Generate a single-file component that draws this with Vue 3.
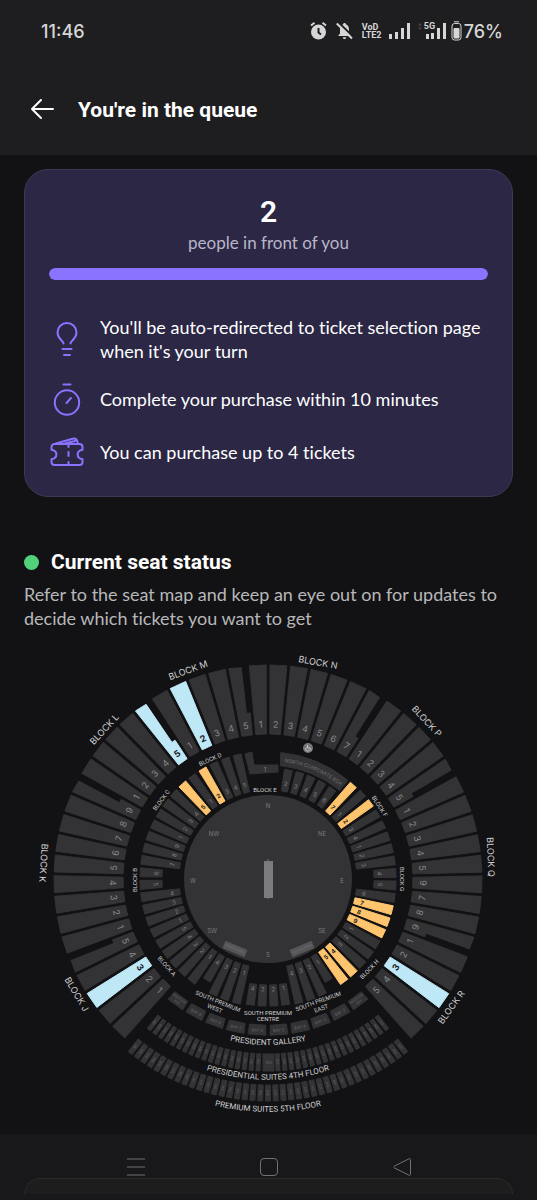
<script setup>
import { computed, ref } from 'vue'

const peopleAhead = ref(2)
const progress = ref(100)

const tips = [
  { icon: 'bulb', text: "You'll be auto-redirected to ticket selection page when it's your turn" },
  { icon: 'timer', text: 'Complete your purchase within 10 minutes' },
  { icon: 'ticket', text: 'You can purchase up to 4 tickets' },
]

// angles run clockwise from the north end of the ground, in degrees
const point = (angle, radius) => {
  const rad = (angle * Math.PI) / 180
  return [Math.sin(rad) * radius, -Math.cos(rad) * radius]
}
const toPoints = (list) => list.map((p) => p.map((n) => n.toFixed(2)).join(',')).join(' ')

// a stand with outer width wo and inner width wi, centred on an angle
const wedge = (angle, inner, outer, wi, wo) => {
  const rad = (angle * Math.PI) / 180
  const place = (x, r) => [Math.cos(rad) * x + Math.sin(rad) * r, Math.sin(rad) * x - Math.cos(rad) * r]
  return toPoints([place(-wi / 2, inner), place(-wo / 2, outer), place(wo / 2, outer), place(wi / 2, inner)])
}

const readable = (angle) => (Math.abs(angle) > 90 ? angle + 180 : angle)
const labelAt = (angle, radius, rotate = readable(angle)) => {
  const [x, y] = point(angle, radius)
  return `translate(${x.toFixed(2)} ${y.toFixed(2)}) rotate(${rotate.toFixed(1)})`
}

const upperBlocks = [['J', 5], ['K', 9], ['L', 5], ['M', 5], ['N', 7], ['P', 5], ['Q', 9], ['R', 5]]
const upperOpen = ['J3', 'L5', 'M2', 'R3']

const upperStands = computed(() => {
  const stands = []
  let index = 0
  upperBlocks.forEach(([block, count]) => {
    for (let seat = 1; seat <= count; seat++) {
      const angle = -135.7 + 5.54 * index
      const left = angle - 2.77
      const right = angle + 2.77
      // the last stand of a block gives way to the stairs
      const shape = seat === count && block !== 'R'
        ? [point(left + 0.7, 145), point(left + 0.5, 214), point(right - 1.7, 213), point(right - 1.9, 167), point(right - 0.6, 167), point(right - 0.7, 145)]
        : [point(left + 0.7, 145), point(left + 0.5, 214), point(right - 0.5, 214), point(right - 0.7, 145)]
      stands.push({ id: block + seat, seat, points: toPoints(shape), label: labelAt(angle, 155), open: upperOpen.includes(block + seat) })
      index++
    }
  })
  return stands
})

const lowerBlocks = [
  ['W', [1, 2, 3, 4], -165.7], ['A', [1, 2, 3, 4, 5], -143.2], ['B', [1, 2, 3, 4, 5, 6, 7, 8, 9], -115.1], ['C', [1, 2, 3, 4, 5], -64.5], ['D', [1, 2, 3, 4, 5], -36.4],
  ['F', [1, 2, 3, 4], 47.9], ['G', [1, 2, 3, 4, 5, 6, 7, 8, 9], 70.4], ['H', [1, 2, 3, 4, 5], 121], ['S', [1, 2, 3, 4], 149.1],
]
const lowerOpen = ['C5', 'D2', 'E7', 'F2', 'G7', 'G8', 'G9', 'H4', 'H5']

const lowerStands = computed(() => {
  const stands = []
  lowerBlocks.forEach(([block, seats, start]) => {
    seats.forEach((seat, i) => {
      const id = block + seat
      const angle = start + 5.62 * i
      const short = ['B5', 'B6', 'G4', 'G5'].includes(id)
      const clipped = ['W4', 'S1'].includes(id)
      const wide = 'DFWS'.includes(block) ? 8 : 9
      const flat = Math.abs(angle) > 95 && Math.abs(angle) < 117
      const turn = flat ? angle - Math.sign(angle) * 90 : readable(angle)
      stands.push({
        id,
        seat,
        points: wedge(angle, short ? 106 : 89, clipped ? 118 : 128, short ? 7 : 6, wide),
        label: labelAt(angle, short ? 112 : 97, turn),
        open: lowerOpen.includes(id),
      })
    })
  })
  const north = [10.6, 16.7, 22.9, 29.2, 35.6, 42.2]
  north.forEach((angle, i) => {
    const id = 'E' + (i + 2)
    stands.push({ id, seat: i + 2, points: wedge(angle, 89, id === 'E7' ? 127 : 111, 6, 8), label: labelAt(angle, 97), open: lowerOpen.includes(id) })
  })
  ;[172, 177.3, -177.3, -172].forEach((angle, i) => {
    stands.push({ id: 'X' + (i + 1), seat: i + 1, points: wedge(angle, 106, 127, 7, 8), label: labelAt(angle, 110), open: false })
  })
  return stands
})

const bays = computed(() =>
  Array.from({ length: 10 }, (_, i) => {
    const angle = 180 + (4.5 - i) * 8.1
    return {
      id: i,
      points: wedge(angle, 146, 156, 16, 18),
      label: labelAt(angle, 151, angle - 180),
      lines: i === 0 || i === 9 ? ['PRESIDENT', 'BOX'] : [`BAY ${10 - i}`],
    }
  }),
)

const suites = computed(() => {
  const list = []
  for (let i = 0; i < 18; i++) {
    for (const side of [-1, 1]) {
      const angle = side * (177 - i * 2.08)
      list.push({ id: `p${side}${i}`, points: wedge(angle, 175, 192, 4, 4), label: labelAt(angle, 183, angle + 90), text: 419 + side * (i + 1) })
    }
  }
  for (let i = -19; i <= 19; i++) {
    const angle = 180 + i * 2.02
    list.push({ id: `f${i}`, points: wedge(angle, 206, 222, 5, 5), label: labelAt(angle, 214, angle + 90), text: 520 - i })
  }
  return list
})

const names = [
  { text: 'BLOCK J', x: -191, y: 115, turn: 59 },
  { text: 'BLOCK K', x: -224, y: -16, turn: 94 },
  { text: 'BLOCK L', x: -164, y: -150, turn: -47 },
  { text: 'BLOCK M', x: -80, y: -209, turn: -20 },
  { text: 'BLOCK N', x: 50, y: -217, turn: 10 },
  { text: 'BLOCK P', x: 159, y: -158, turn: 47 },
  { text: 'BLOCK Q', x: 223, y: -22, turn: 88 },
  { text: 'BLOCK R', x: 183, y: 128, turn: -54 },
  { text: 'BLOCK A', x: -101, y: 87, turn: 49, small: true },
  { text: 'BLOCK B', x: -134, y: 1, turn: -90, small: true },
  { text: 'BLOCK C', x: -107, y: -79, turn: -53, small: true },
  { text: 'BLOCK D', x: -58, y: -120, turn: -24, small: true },
  { text: 'BLOCK E', x: -3, y: -90, turn: 0, small: true },
  { text: 'BLOCK F', x: 112, y: -73, turn: 57, small: true },
  { text: 'BLOCK G', x: 134, y: 0, turn: 90, small: true },
  { text: 'BLOCK H', x: 101, y: 90, turn: -47, small: true },
  { text: 'SOUTH PREMIUM', x: -50, y: 122, turn: 22, small: true },
  { text: 'WEST', x: -53, y: 129, turn: 22, small: true },
  { text: 'SOUTH PREMIUM', x: 0, y: 133, turn: 0, small: true },
  { text: 'CENTRE', x: 0, y: 139, turn: 0, small: true },
  { text: 'SOUTH PREMIUM', x: 50, y: 122, turn: -20, small: true },
  { text: 'EAST', x: 53, y: 129, turn: -20, small: true },
]

const compass = [
  ['N', 0, -74], ['NE', 54, -46], ['E', 74, 1], ['SE', 54, 51],
  ['S', 0, 75], ['SW', -56, 51], ['W', -75, 1], ['NW', -54, -46],
]
</script>

<template>
  <div class="screen">
    <header class="top">
      <div class="status">
        <span class="clock">11:46</span>
        <div class="indicators">
          <svg class="alarm" viewBox="0 0 17 18" width="17" height="18">
            <circle cx="8.500" cy="10" r="7.500" />
            <path d="M1 3.500 4.500 .8M16 3.500 12.500 .8" class="line" />
            <path d="M8.500 6v4.500l2.500 2" class="hand" />
          </svg>
          <svg class="muted" viewBox="0 0 17 18" width="17" height="18">
            <path d="M8.500 1c1 0 1.300.6 1.300 1.300C12 3 13 5 13 7.500v4L15 14H2l2-2.500v-4C4 5 5 3 7.200 2.300 7.200 1.600 7.500 1 8.500 1zM6.800 15.200h3.400c0 2.400-3.400 2.400-3.400 0z" />
            <path d="M2.500 .5 17 14.500" class="cut" />
            <path d="M.8 1.500 16 16.500" class="line" />
          </svg>
          <span class="volte"><span>VoD</span><span>LTE2</span></span>
          <svg class="bars" viewBox="0 0 22 16" width="22" height="16">
            <path d="M0 11h3v5H0zM6 9h3v7H6zM12 5h3v11h-3zM18 0h3v16h-3z" />
          </svg>
          <span class="five-g">
            <svg class="bars" viewBox="0 0 28 18" width="28" height="18">
              <path d="M0 3.500 2 1l2 2.500zM0 5.500 2 8l2-2.500z" class="dim" />
              <path d="M8 12h3v5H8zM13 11h3v6h-3zM19 6h3v11h-3zM25 1h3v16h-3z" />
            </svg>
            <small>5G</small>
          </span>
          <svg class="battery" viewBox="0 0 11 20" width="11" height="20">
            <path d="M3 .8h5" class="line" />
            <rect x="1" y="2.500" width="9" height="16.500" rx="2.500" class="line" />
            <rect x="2.500" y="7" width="6" height="10.500" rx="1" />
          </svg>
          <span class="charge">76%</span>
        </div>
      </div>
      <div class="bar">
        <button type="button" class="back" aria-label="Go back">
          <svg viewBox="0 0 24 24" width="24" height="24"><path d="M11 3 2 12l9 9M2 12h21" /></svg>
        </button>
        <h1>You're in the queue</h1>
      </div>
    </header>

    <main>
      <section class="queue">
        <p class="count">{{ peopleAhead }}</p>
        <p class="caption">people in front of you</p>
        <div class="track" role="progressbar" :aria-valuenow="progress" aria-label="Queue progress">
          <div class="fill" :style="{ width: progress + '%' }"></div>
        </div>
        <ul>
          <li v-for="tip in tips" :key="tip.icon">
            <svg v-if="tip.icon === 'bulb'" viewBox="0 0 36 36" width="36" height="36">
              <path d="M14.500 21.500c0-3-6-4.500-6-11a9.500 9.500 0 0 1 19 0c0 6.500-6 8-6 11" />
              <path d="M13.500 27h9M15 33h6" />
            </svg>
            <svg v-else-if="tip.icon === 'timer'" viewBox="0 0 36 36" width="36" height="36">
              <circle cx="18" cy="20.500" r="12.200" />
              <path d="M14.500 2.500h7M17.500 21l4.500-5" />
            </svg>
            <svg v-else viewBox="0 0 36 36" width="36" height="36">
              <path d="M5.500 9h25a3 3 0 0 1 3 3v2.800c-6.500 1.200-6.500 8.200 0 9.400V27a3 3 0 0 1-3 3h-25a3 3 0 0 1-3-3v-2.800c6.500-1.200 6.500-8.200 0-9.400V12a3 3 0 0 1 3-3z" />
              <path d="M7 8.500 23.500 3.800c2.500-.8 4 .2 4.700 2.200l.9 2.500M16 8.500 28 5.500" />
              <path d="M19.500 9.500v2.500M19.500 17v4M19.500 27v2.500" />
            </svg>
            <span>{{ tip.text }}</span>
          </li>
        </ul>
      </section>

      <section class="seats">
        <h2><span class="dot"></span>Current seat status</h2>
        <p>Refer to the seat map and keep an eye out on for updates to decide which tickets you want to get</p>
      </section>

      <svg class="map" viewBox="-268 -239 537 494" role="img" aria-label="Seat map">
        <defs>
          <path id="box-arc" d="M4 -118 A118 118 0 0 1 82 -85" />
          <path id="gallery-arc" d="M-117.400 117.400 A166 166 0 0 0 117.400 117.400" />
          <path id="fourth-arc" d="M-142 142 A201 201 0 0 0 142 142" />
          <path id="fifth-arc" d="M-164.700 164.700 A233 233 0 0 0 164.700 164.700" />
        </defs>

        <g v-for="stand in upperStands" :key="stand.id" class="upper" :class="{ open: stand.open }">
          <polygon :points="stand.points" />
          <text :transform="stand.label">{{ stand.seat }}</text>
        </g>

        <circle r="84" class="field" />
        <g class="lower">
          <polygon points="-23,-125 -16,-127 -14,-114 10,-114 10,-107 -18,-105" />
          <text x="-3" y="-110">1</text>
          <path d="M12.700 -126.400 A127 127 0 0 1 79.900 -98.700 L71.700 -88.600 A114 114 0 0 0 12.500 -113.300Z" />
        </g>
        <g v-for="stand in lowerStands" :key="stand.id" class="lower" :class="{ open: stand.open }">
          <polygon :points="stand.points" />
          <text :transform="stand.label">{{ stand.seat }}</text>
        </g>
        <text class="box-name"><textPath href="#box-arc" startOffset="50%">NORTH CORPORATE BOX</textPath></text>
        <g class="access">
          <circle cx="40" cy="-131" r="5" />
          <path d="M39.500 -134v3h2.500l1 2.500M38.500 -131.500a2 2 0 1 0 3 2.500" />
        </g>

        <g class="micro">
          <g v-for="bay in bays" :key="bay.id">
            <polygon :points="bay.points" />
            <text :transform="bay.label" :class="{ bay: bay.lines.length === 1 }">
              <tspan v-for="(line, i) in bay.lines" :key="line" x="0" :y="bay.lines.length === 1 ? 0 : i * 4 - 2">{{ line }}</tspan>
            </text>
          </g>
          <rect x="-5" y="175" width="11" height="17" />
          <text x="1" y="184">BOX</text>
          <g v-for="suite in suites" :key="suite.id">
            <polygon :points="suite.points" />
            <text :transform="suite.label">{{ suite.text }}</text>
          </g>
        </g>

        <g class="screens">
          <rect x="-12" y="-4" width="24" height="8" transform="translate(-33 70) rotate(23)" />
          <rect x="-12" y="-4" width="24" height="8" transform="translate(34 70) rotate(-23)" />
          <text transform="translate(-33 70) rotate(23)">SIGHTSCREEN</text>
          <text transform="translate(34 70) rotate(-23)">SIGHTSCREEN</text>
        </g>
        <path d="M0 -20V20" class="stumps" />
        <rect x="-4" y="-18" width="9" height="37" class="wicket" />
        <text v-for="[name, x, y] in compass" :key="name" :x="x" :y="y" class="compass">{{ name }}</text>

        <text v-for="(name, i) in names" :key="i" class="name" :class="{ small: name.small }" :transform="`translate(${name.x} ${name.y}) rotate(${name.turn})`">{{ name.text }}</text>
        <text class="tier"><textPath href="#gallery-arc" startOffset="50%">PRESIDENT GALLERY</textPath></text>
        <text class="tier"><textPath href="#fourth-arc" startOffset="50%">PRESIDENTIAL SUITES 4TH FLOOR</textPath></text>
        <text class="tier"><textPath href="#fifth-arc" startOffset="50%">PREMIUM SUITES 5TH FLOOR</textPath></text>
      </svg>
    </main>

    <footer>
      <nav>
        <button type="button" aria-label="Recent apps">
          <svg viewBox="0 0 20 20" width="20" height="20"><path d="M1 2h18M1 10h18M1 18h18" /></svg>
        </button>
        <button type="button" aria-label="Home">
          <svg viewBox="0 0 20 20" width="20" height="20"><rect x="1.500" y="1.500" width="17" height="17" rx="3.500" /></svg>
        </button>
        <button type="button" aria-label="Back">
          <svg viewBox="0 0 20 20" width="20" height="20"><path d="M17 1.800 2.500 9c-1 .6-1 1.400 0 2L17 18.200c.8.400 1.500 0 1.500-.9V2.700c0-.9-.7-1.300-1.500-.9z" /></svg>
        </button>
      </nav>
      <div class="sheet"></div>
    </footer>
  </div>
</template>

<style>
body { margin: 0; background: #121214; }
</style>

<style scoped>
.screen { min-height: 100vh; display: flex; flex-direction: column; background: #121214; color: #fff; font-family: Lato, "Liberation Sans", sans-serif; font-variant-ligatures: none; }
h1, h2, p, ul { margin: 0; padding: 0; }
button { border: 0; padding: 0; background: none; color: inherit; cursor: pointer; }
svg { display: block; flex: none; }

.top { background: #1e1e20; }
.status { display: flex; justify-content: space-between; align-items: center; height: 62px; padding: 0 34px 0 41px; color: #d6d6d6; font: 500 18px Inter, sans-serif; }
.indicators { display: flex; align-items: center; }
.indicators svg { fill: #d6d6d6; }
.indicators .line { fill: none; stroke: #d6d6d6; stroke-width: 2; }
.alarm .hand { fill: none; stroke: #1e1e20; stroke-width: 2; }
.muted { margin-left: 9px; }
.muted .cut { stroke: #1e1e20; stroke-width: 2; }
.volte { display: flex; flex-direction: column; margin: 0 7px 0 9px; width: 20px; font: 700 9px/8px Roboto, sans-serif; white-space: nowrap; }
.five-g { position: relative; margin: 0 5px 0 7px; }
.five-g small { position: absolute; left: 6px; top: 0; background: #1e1e20; font: 700 9px/9px Roboto, sans-serif; }
.indicators .dim { fill: #48484a; }
.battery .line { stroke-width: 1; }
.charge { margin-left: 2px; }
.bar { display: flex; align-items: center; gap: 24px; height: 93px; padding: 0 30px; }
.back svg { fill: none; stroke: #fff; stroke-width: 2; stroke-linecap: round; stroke-linejoin: round; }
h1, h2 { font: 700 21px/28px Roboto, sans-serif; }
.bar h1 { padding-top: 3px; }

main { flex: 1; padding-top: 14px; }
.queue { margin: 0 24px; padding: 24px 24px 25px; border: 1px solid #3e3957; border-radius: 24px; background: #2b2745; text-align: center; }
.count { font: 600 30px/36px Roboto, sans-serif; }
.caption { margin-top: 1px; color: #b9b6c8; font-size: 17px; line-height: 24px; }
.track { margin-top: 13px; height: 12px; border-radius: 6px; background: #40395f; overflow: hidden; }
.fill { height: 100%; border-radius: 6px; background: #8a73ff; }
.queue ul { display: flex; flex-direction: column; gap: 17px; margin-top: 35px; list-style: none; text-align: left; }
.queue li { display: flex; align-items: center; gap: 15px; min-height: 36px; font-size: 18px; line-height: 24px; }
.queue li span { padding-bottom: 2px; }
.queue li svg { fill: none; stroke: #8a73ff; stroke-width: 2; stroke-linecap: round; stroke-linejoin: round; }

.seats { padding: 51px 24px 0; }
.seats h2 { display: flex; align-items: center; gap: 12px; }
.dot { width: 15px; height: 15px; border-radius: 50%; background: #50d17a; }
.seats p { margin-top: 6px; color: #b8b8ba; font-size: 18px; line-height: 24px; }

.map { width: 100%; height: auto; margin-top: 10px; }
.map text { text-anchor: middle; dominant-baseline: central; font-family: Inter, sans-serif; }
.upper, .lower, .micro { fill: #333335; stroke: #333335; stroke-width: 1; stroke-linejoin: round; }
.upper text { fill: #88888a; stroke: none; font-size: 9px; }
.lower text { fill: #808082; stroke: none; font-size: 6px; }
.upper.open text, .lower.open text { fill: #1b1b1d; font-weight: 700; }
.upper.open polygon { fill: #bfe8f6; stroke: #bfe8f6; }
.lower.open polygon { fill: #ffc46e; stroke: #ffc46e; }
.field { fill: #333335; }
.map .box-name { fill: #707072; font-size: 5px; dominant-baseline: auto; }
.access circle { fill: #777779; }
.access path { fill: none; stroke: #c4c4c4; stroke-width: 1; }
.micro text { fill: #69696b; stroke: none; font-size: 3px; }
.micro .bay { font-size: 4px; }
.screens rect { fill: #555557; }
.screens text { fill: #77777a; font-size: 3px; }
.wicket { fill: #7b7b7d; }
.stumps { stroke: #7b7b7d; }
.compass { fill: #7b7b7d; font-size: 6px; }
.name, .tier { fill: #d0d0d2; font-size: 9px; }
.map .small { font-family: Roboto, sans-serif; font-size: 6px; }
.map .tier { font-family: Roboto, sans-serif; font-size: 8px; dominant-baseline: auto; }

footer { background: #18181a; padding-bottom: 6px; overflow: hidden; }
nav { display: flex; justify-content: center; gap: 93px; height: 44px; }
nav button { display: flex; justify-content: center; align-items: flex-end; width: 40px; padding-bottom: 1px; }
nav svg { fill: none; stroke: #717173; stroke-width: 1; }
.sheet { height: 15px; margin: 0 24px; border: 1px solid #29292b; border-bottom: 0; border-radius: 24px 24px 0 0; background: #1d1d1e; }
</style>
